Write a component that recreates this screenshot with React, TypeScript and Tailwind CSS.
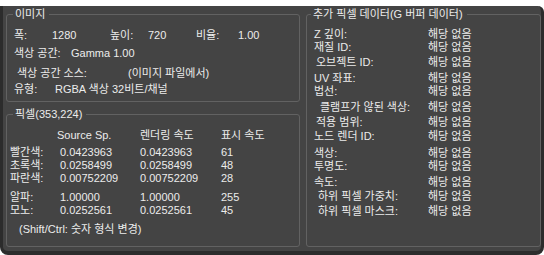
const rightRows = [
  { label: "Z 깊이:", mt: "mt-[7px]", pl: "pl-0" },
  { label: "재질 ID:", mt: "mt-0", pl: "pl-0" },
  { label: "오브젝트 ID:", mt: "mt-[2px]", pl: "pl-[2px]" },
  { label: "UV 좌표:", mt: "mt-[3px]", pl: "pl-0" },
  { label: "법선:", mt: "mt-0", pl: "pl-0" },
  { label: "클램프가 않된 색상:", mt: "mt-[3px]", pl: "pl-[6px]" },
  { label: "적용 범위:", mt: "mt-[2px]", pl: "pl-[2px]" },
  { label: "노드 렌더 ID:", mt: "mt-[1px]", pl: "pl-0" },
  { label: "색상:", mt: "mt-[4px]", pl: "pl-0" },
  { label: "투명도:", mt: "mt-0", pl: "pl-0" },
  { label: "속도:", mt: "mt-[3px]", pl: "pl-0" },
  { label: "하위 픽셀 가중치:", mt: "mt-[1px]", pl: "pl-[4px]" },
  { label: "하위 픽셀 마스크:", mt: "mt-[2px]", pl: "pl-[4px]" },
];

const pixelRows = [
  { label: "빨간색:", a: "0.0423963", b: "0.0423963", c: "61", mt: "mt-[4px]" },
  { label: "초록색:", a: "0.0258499", b: "0.0258499", c: "48", mt: "mt-0" },
  { label: "파란색:", a: "0.00752209", b: "0.00752209", c: "28", mt: "mt-0" },
  { label: "알파:", a: "1.00000", b: "1.00000", c: "255", mt: "mt-[6px]" },
  { label: "모노:", a: "0.0252561", b: "0.0252561", c: "45", mt: "mt-0" },
];

export default function App() {
  return (
    <div className="w-[544px] h-[255px] bg-white font-['Liberation_Sans','Noto_Sans_CJK_KR',sans-serif] text-[11px] leading-[13px] text-[#ececec] overflow-hidden">
      <div className="mt-[6px] h-[249px] bg-[#444444] border-l-[3px] border-r-[3px] border-b-[4px] border-[#2c2c2c] rounded-tr-[6px] rounded-b-[8px] flex items-start gap-[6px] pl-[3px] pt-[1px]">
        <div className="w-[294px] flex flex-col gap-[5px]">
          <fieldset className="border border-[#626262] rounded-[3px] pl-[7px] pb-[5px]">
            <legend className="ml-[-1px] pl-[2px] pr-[4px] leading-[14px]">이미지</legend>
            <div className="flex h-[14px] items-center mt-[7px] whitespace-nowrap">
              <span className="w-[38px]">폭:</span>
              <span className="w-[58px]">1280</span>
              <span className="w-[38px]">높이:</span>
              <span className="w-[48px]">720</span>
              <span className="w-[42px]">비율:</span>
              <span>1.00</span>
            </div>
            <div className="flex h-[14px] items-center mt-[4px] whitespace-nowrap">
              <span className="w-[57px]">색상 공간:</span>
              <span>Gamma 1.00</span>
            </div>
            <div className="flex h-[14px] items-center mt-[6px] whitespace-nowrap">
              <span className="w-[114px] pl-[3px]">색상 공간 소스:</span>
              <span>(이미지 파일에서)</span>
            </div>
            <div className="flex h-[14px] items-center mt-[2px] whitespace-nowrap">
              <span className="w-[41px]">유형:</span>
              <span>RGBA 색상 32비트/채널</span>
            </div>
          </fieldset>
          <fieldset className="border border-[#626262] rounded-[3px] pl-[3px] pb-[10px]">
            <legend className="ml-[3px] pl-[2px] pr-[4px] leading-[14px]">픽셀(353,224)</legend>
            <div className="flex h-[13px] items-center mt-[8px] whitespace-nowrap">
              <span className="w-[47px]"></span>
              <span className="w-[83px]">Source Sp.</span>
              <span className="w-[81px]">렌더링 속도</span>
              <span>표시 속도</span>
            </div>
            {pixelRows.map((r) => (
              <div key={r.label} className={`flex h-[13px] items-center whitespace-nowrap ${r.mt}`}>
                <span className="w-[50px]">{r.label}</span>
                <span className="w-[80px]">{r.a}</span>
                <span className="w-[81px]">{r.b}</span>
                <span>{r.c}</span>
              </div>
            ))}
            <div className="flex h-[13px] items-center mt-[6px] pl-[9px] whitespace-nowrap">
              (Shift/Ctrl: 숫자 형식 변경)
            </div>
          </fieldset>
        </div>
        <fieldset className="w-[235px] h-[240px] border border-[#626262] rounded-[3px] pl-[7px]">
          <legend className="ml-[-3px] pl-[2px] pr-[4px] leading-[14px] whitespace-nowrap">추가 픽셀 데이터(G 버퍼 데이터)</legend>
          {rightRows.map((r) => (
            <div key={r.label} className={`flex h-[13px] items-center whitespace-nowrap ${r.mt}`}>
              <span className={`w-[114px] ${r.pl}`}>{r.label}</span>
              <span>해당 없음</span>
            </div>
          ))}
        </fieldset>
      </div>
    </div>
  );
}
